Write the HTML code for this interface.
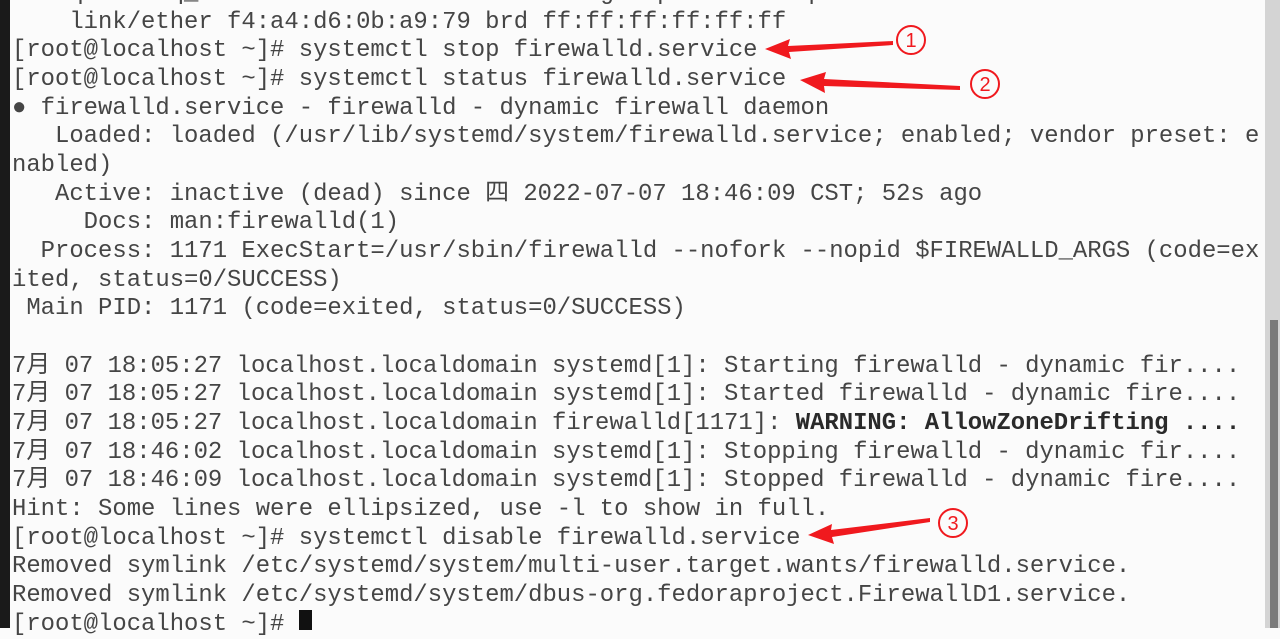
<!DOCTYPE html>
<html><head><meta charset="utf-8"><style>
html,body{margin:0;padding:0;width:1280px;height:628px;overflow:hidden;background:#fbfbfb;}
.lb{position:absolute;left:0;top:0;width:10px;height:628px;background:#1a1a1a;}
pre{position:absolute;left:12px;top:-20px;margin:0;font-family:"Liberation Mono","Noto Sans CJK SC",monospace;font-size:23.9px;line-height:28.67px;color:#454545;white-space:pre;}
b{color:#2a2a2a;}
.trough{position:absolute;left:1265px;top:0;width:15px;height:628px;background:#d4d4d4;}
.thumb{position:absolute;left:1270px;top:320px;width:8px;height:308px;background:#7a7a7a;}
.cur{position:absolute;left:299px;top:610px;width:13px;height:20px;background:#111;}
svg{position:absolute;left:0;top:0;}
</style></head><body>
<div class="lb"></div>
<pre>    qdisc fq_codel state UP mode DEFAULT group default qlen 1000
    link/ether f4:a4:d6:0b:a9:79 brd ff:ff:ff:ff:ff:ff
[root@localhost ~]# systemctl stop firewalld.service
[root@localhost ~]# systemctl status firewalld.service
● firewalld.service - firewalld - dynamic firewall daemon
   Loaded: loaded (/usr/lib/systemd/system/firewalld.service; enabled; vendor preset: e
nabled)
   Active: inactive (dead) since 四 2022-07-07 18:46:09 CST; 52s ago
     Docs: man:firewalld(1)
  Process: 1171 ExecStart=/usr/sbin/firewalld --nofork --nopid $FIREWALLD_ARGS (code=ex
ited, status=0/SUCCESS)
 Main PID: 1171 (code=exited, status=0/SUCCESS)

7月 07 18:05:27 localhost.localdomain systemd[1]: Starting firewalld - dynamic fir....
7月 07 18:05:27 localhost.localdomain systemd[1]: Started firewalld - dynamic fire....
7月 07 18:05:27 localhost.localdomain firewalld[1171]: <b>WARNING: AllowZoneDrifting ....</b>
7月 07 18:46:02 localhost.localdomain systemd[1]: Stopping firewalld - dynamic fir....
7月 07 18:46:09 localhost.localdomain systemd[1]: Stopped firewalld - dynamic fire....
Hint: Some lines were ellipsized, use -l to show in full.
[root@localhost ~]# systemctl disable firewalld.service
Removed symlink /etc/systemd/system/multi-user.target.wants/firewalld.service.
Removed symlink /etc/systemd/system/dbus-org.fedoraproject.FirewallD1.service.
[root@localhost ~]# </pre>
<div class="cur"></div>
<div class="trough"></div><div class="thumb"></div>
<svg width="1280" height="628" viewBox="0 0 1280 628">
<g fill="#f0191e" stroke="none">
<polygon points="765,49 790,39 788,46 893,41 893,45 789,52 791,59"/>
<polygon points="800,80 826,72 824,79 960,86 960,90 824,86 825,93"/>
<polygon points="808,535 832,524 831,530 930,518 930,522 832,537 834,544"/>
</g>
<g fill="none" stroke="#f0191e" stroke-width="2">
<circle cx="911" cy="40" r="14"/><circle cx="985" cy="84" r="14"/><circle cx="953" cy="523" r="14"/>
</g>
<g fill="#f0191e" font-family="Liberation Sans,sans-serif" font-size="20" text-anchor="middle">
<text x="911" y="47">1</text><text x="985" y="91">2</text><text x="953" y="530">3</text>
</g>
</svg>
</body></html>
